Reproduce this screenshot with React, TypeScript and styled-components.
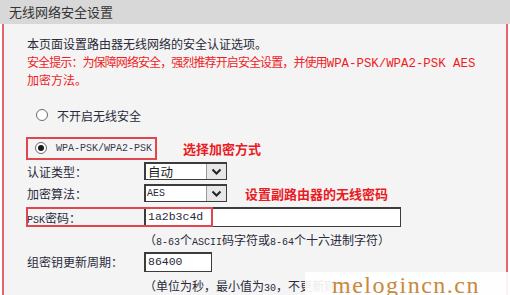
import React from "react";
import styled, { createGlobalStyle } from "styled-components";

const Global = createGlobalStyle`
  html, body { margin: 0; padding: 0; background: #ffffff; }
  body { width: 510px; height: 295px; overflow: hidden; }
`;

const CJK = `"Noto Sans CJK SC", "Noto Sans", sans-serif`;
const MONO = `"Liberation Mono", "DejaVu Sans Mono", monospace`;

const Page = styled.div`
  position: relative;
  width: 510px;
  height: 295px;
  overflow: hidden;
  font-family: ${CJK};
  color: #2a2a3a;
  background: #ffffff;
`;

const Header = styled.div`
  height: 24px;
  background: #d8d8d8;
  padding-left: 9px;
  font-size: 13px;
  line-height: 24px;
  color: #333333;
`;

const Panel = styled.div`
  box-sizing: border-box;
  margin-left: 2px;
  width: 506px;
  height: 271px;
  background: #f4f4f4;
  border-left: 2px solid #e4656c;
  border-right: 2px solid #e4656c;
  padding: 11px 0 0 23px;
  display: flex;
  flex-direction: column;
`;

const Line = styled.div<{ $red?: boolean; $tight?: boolean }>`
  height: 18px;
  font-size: 12px;
  line-height: 18px;
  white-space: nowrap;
  color: ${(p) => (p.$red ? "#ee1c25" : "#2a2a3a")};
  letter-spacing: ${(p) => (p.$tight ? "-0.9px" : "0")};
`;

const Mono = styled.span<{ $size: number }>`
  font-family: ${MONO};
  font-size: ${(p) => p.$size}px;
  letter-spacing: 0;
`;

const RadioRow = styled.div<{ $top: number }>`
  margin-top: ${(p) => p.$top}px;
  height: 20px;
  display: flex;
  align-items: center;
`;

const Radio = styled.span<{ $checked?: boolean; $left: number }>`
  box-sizing: border-box;
  flex: none;
  width: 12px;
  height: 12px;
  border-radius: 50%;
  border: 1px solid #6a6a6a;
  background: #ffffff;
  display: inline-flex;
  align-items: center;
  justify-content: center;
  margin-left: ${(p) => p.$left}px;
  margin-right: 9px;
  &::after {
    content: "";
    display: ${(p) => (p.$checked ? "block" : "none")};
    width: 6px;
    height: 6px;
    border-radius: 50%;
    background: #1a1a1a;
  }
`;

const RadioText = styled.span`
  font-size: 12px;
  color: #2a2a3a;
`;

const WpaBox = styled.div`
  box-sizing: border-box;
  flex: none;
  margin-left: -1px;
  width: 131px;
  height: 23px;
  border: 2px solid #e0464e;
  display: flex;
  align-items: center;
`;

const WpaText = styled.span`
  font-family: ${MONO};
  font-size: 10px;
  color: #3a3a4c;
  white-space: nowrap;
`;

const Note = styled.span<{ $left: number }>`
  margin-left: ${(p) => p.$left}px;
  font-size: 13px;
  font-weight: 700;
  color: #ea1b23;
  white-space: nowrap;
`;

const FormRow = styled.div<{ $top: number; $h: number }>`
  position: relative;
  margin-top: ${(p) => p.$top}px;
  height: ${(p) => p.$h}px;
  display: flex;
  align-items: center;
`;

const Label = styled.span`
  width: 117px;
  flex: none;
  font-size: 12px;
  color: #2a2a3a;
  white-space: nowrap;
`;

const Select = styled.div`
  box-sizing: border-box;
  width: 83px;
  height: 18px;
  background: #ffffff;
  border: 1px solid #3c3c3c;
  border-top-width: 2px;
  border-left-width: 2px;
  display: flex;
  align-items: stretch;
`;

const SelectValue = styled.span`
  flex: 1;
  padding-left: 2px;
  font-size: 12.5px;
  line-height: 15px;
  color: #1c1c1c;
  white-space: nowrap;
`;

const SelectMono = styled.span`
  flex: 1;
  padding-left: 1px;
  font-family: ${MONO};
  font-size: 10px;
  line-height: 15px;
  color: #2a2a3a;
`;

const Drop = styled.span`
  width: 19px;
  flex: none;
  background: #e7e7e7;
  border-left: 1px solid #9a9a9a;
  display: flex;
  align-items: center;
  justify-content: center;
`;

const TextInput = styled.div<{ $w: number }>`
  box-sizing: border-box;
  width: ${(p) => p.$w}px;
  height: 20px;
  background: #ffffff;
  border: 1px solid #3c3c3c;
  border-top-width: 2px;
  border-left-width: 2px;
  padding-left: 2px;
  font-family: ${MONO};
  font-size: 11.5px;
  line-height: 16px;
  color: #2a2a3a;
`;

const PskFrame = styled.div`
  position: absolute;
  box-sizing: border-box;
  left: -1px;
  top: 0;
  width: 187px;
  height: 20px;
  border: 2px solid #e0464e;
  pointer-events: none;
`;

const Hint = styled.div<{ $top: number }>`
  margin-top: ${(p) => p.$top}px;
  margin-left: 117px;
  height: 18px;
  font-size: 12px;
  line-height: 18px;
  color: #2a2a3a;
  white-space: nowrap;
`;

const Watermark = styled.div`
  position: absolute;
  left: 305px;
  top: 272px;
  width: 205px;
  height: 23px;
  overflow: hidden;
  background: rgba(255, 255, 255, 0.9);
  padding-left: 27px;
  box-sizing: border-box;
  font-family: "Liberation Serif", "DejaVu Serif", serif;
  font-size: 24px;
  line-height: 26px;
  letter-spacing: 1.5px;
  color: #c8893d;
  white-space: nowrap;
`;

const Chevron = () => (
  <svg width="11" height="8" viewBox="0 0 11 8">
    <path d="M1.5 1.5 L5.5 5.5 L9.5 1.5" fill="none" stroke="#222" strokeWidth="2" />
  </svg>
);

export default function App() {
  return (
    <Page>
      <Global />
      <Header>无线网络安全设置</Header>
      <Panel>
        <Line>本页面设置路由器无线网络的安全认证选项。</Line>
        <Line $red $tight>
          安全提示：为保障网络安全，强烈推荐开启安全设置，并使用<Mono $size={12.4}>WPA-PSK/WPA2-PSK AES</Mono>
        </Line>
        <Line $red>加密方法。</Line>

        <RadioRow $top={16}>
          <Radio $left={9} />
          <RadioText>不开启无线安全</RadioText>
        </RadioRow>

        <RadioRow $top={13}>
          <WpaBox>
            <Radio $checked $left={7} />
            <WpaText>WPA-PSK/WPA2-PSK</WpaText>
          </WpaBox>
          <Note $left={26}>选择加密方式</Note>
        </RadioRow>

        <FormRow $top={4} $h={18}>
          <Label>认证类型：</Label>
          <Select>
            <SelectValue>自动</SelectValue>
            <Drop>
              <Chevron />
            </Drop>
          </Select>
        </FormRow>

        <FormRow $top={4} $h={18}>
          <Label>加密算法：</Label>
          <Select>
            <SelectMono>AES</SelectMono>
            <Drop>
              <Chevron />
            </Drop>
          </Select>
          <Note $left={18}>设置副路由器的无线密码</Note>
        </FormRow>

        <FormRow $top={5} $h={20}>
          <Label>
            <Mono $size={10}>PSK</Mono>密码：
          </Label>
          <TextInput $w={257}>1a2b3c4d</TextInput>
          <PskFrame />
        </FormRow>

        <Hint $top={4}>
          （<Mono $size={10}>8-63</Mono>个<Mono $size={10}>ASCII</Mono>码字符或<Mono $size={10}>8-64</Mono>个十六进制字符）
        </Hint>

        <FormRow $top={3} $h={19}>
          <Label>组密钥更新周期：</Label>
          <TextInput $w={68}>86400</TextInput>
        </FormRow>

        <Hint $top={6}>
          （单位为秒，最小值为<Mono $size={10}>30</Mono>，不更新则为<Mono $size={10}>0</Mono>）
        </Hint>
      </Panel>
      <Watermark>melogincn.cn</Watermark>
    </Page>
  );
}
